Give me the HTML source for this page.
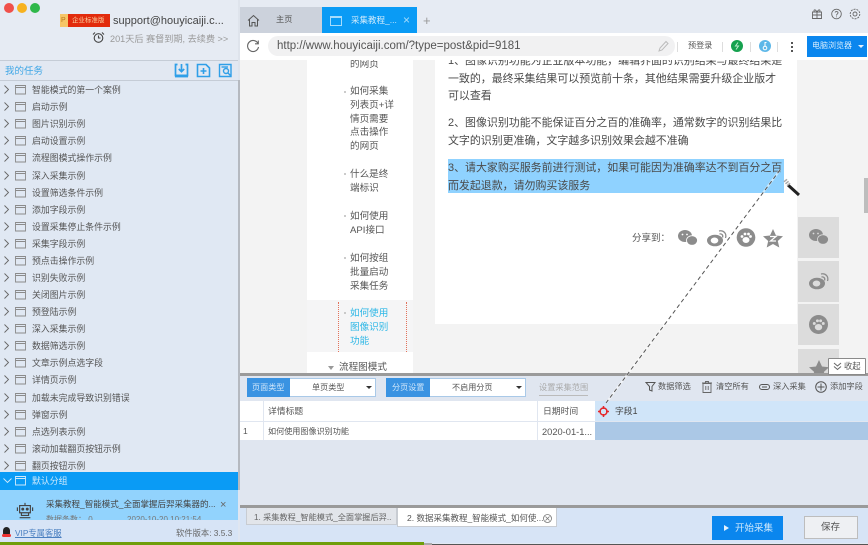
<!DOCTYPE html>
<html><head><meta charset="utf-8">
<style>
html,body{margin:0;padding:0;width:868px;height:545px;overflow:hidden;background:#e2e8f2}
body{font-family:"Liberation Sans","Noto Sans CJK SC",sans-serif;color:#555;position:relative}
#w{position:absolute;left:0;top:0;width:868px;height:545px;filter:blur(.25px)}
.a{position:absolute;white-space:nowrap}
.b{position:absolute}
.it{position:absolute;left:0;width:238px;height:17px;font-size:8.900px;line-height:17px;color:#555}
.it span{position:absolute;left:32px;top:1px}
.it svg{position:absolute;left:0;top:3px}
.p{position:absolute;left:448px;font-size:10.950px;line-height:17.600px;color:#4a4a4a;white-space:nowrap}
.n{position:absolute;left:350px;font-size:9.600px;line-height:13.800px;color:#555;white-space:nowrap}
.d{position:absolute;left:344px;width:2px;height:2px;background:#bbb;border-radius:1px}
.s{position:absolute;left:798px;width:41px;background:#dcdcdc}
</style></head><body><div id="w">
<svg width="0" height="0" style="position:absolute"><defs>
<symbol id="r" viewBox="0 0 27 11"><g fill="none" stroke-width=".9"><path d="M4.500 1.500L8.500 5.500L4.500 9.500" stroke="#666"/><path d="M15.500 1.500H25.500V10H15.500ZM15.500 3.500H25.500" stroke="#8a8a8a"/></g></symbol>
</defs></svg>

<!-- page content (below address bar in stacking order) -->
<div class="b" style="left:240px;top:60px;width:628px;height:315px;background:#f3f3f3"></div>
<div class="b" style="left:307px;top:60px;width:106px;height:240px;background:#fff"></div>
<div class="b" style="left:307px;top:300px;width:106px;height:52px;background:#f5f5f6"></div>
<div class="b" style="left:307px;top:352px;width:106px;height:23px;background:#fff"></div>
<div class="b" style="left:435px;top:60px;width:362px;height:264px;background:#fff"></div>

<div class="n" style="top:58px">的网页</div>
<div class="d" style="top:91px"></div>
<div class="n" style="top:85px">如何采集<br>列表页+详<br>情页需要<br>点击操作<br>的网页</div>
<div class="d" style="top:173px"></div>
<div class="n" style="top:168px">什么是终<br>端标识</div>
<div class="d" style="top:215px"></div>
<div class="n" style="top:210px">如何使用<br>API接口</div>
<div class="d" style="top:257px"></div>
<div class="n" style="top:252px">如何按组<br>批量启动<br>采集任务</div>
<div class="d" style="top:312px"></div>
<div class="n" style="top:307px;color:#2db7e6">如何使用<br>图像识别<br>功能</div>
<div class="b" style="left:338px;top:302px;width:0;height:50px;border-left:1px dotted #e2725b"></div>
<div class="b" style="left:406px;top:302px;width:0;height:50px;border-left:1px dotted #e2725b"></div>
<div class="b" style="left:328px;top:366px;width:0;height:0;border-left:3px solid transparent;border-right:3px solid transparent;border-top:4px solid #999"></div>
<div class="a" style="left:339px;top:361px;font-size:9.600px;line-height:14px;color:#555">流程图模式</div>

<div class="b" style="left:448px;top:159px;width:336px;height:34px;background:#8fd2ff"></div>
<div class="p" style="top:53px">1、图像识别功能为企业版本功能，编辑界面的识别结果与最终结果是</div>
<div class="p" style="top:71px">一致的，最终采集结果可以预览前十条，其他结果需要升级企业版才</div>
<div class="p" style="top:88px">可以查看</div>
<div class="p" style="top:115px">2、图像识别功能不能保证百分之百的准确率，通常数字的识别结果比</div>
<div class="p" style="top:133px">文字的识别更准确，文字越多识别效果会越不准确</div>
<div class="p" style="top:160px">3、请大家购买服务前进行测试，如果可能因为准确率达不到百分之百</div>
<div class="p" style="top:178px">而发起退款，请勿购买该服务</div>

<div class="a" style="left:632px;top:232px;font-size:9.500px;line-height:14px;color:#555">分享到：</div>
<svg class="b" style="left:677px;top:228px" width="108" height="20" viewBox="0 0 108 20" fill="#8c8c8c"><ellipse cx="8" cy="8" rx="7" ry="6"/><ellipse cx="15" cy="12.500" rx="5.500" ry="4.800" stroke="#fff" stroke-width=".8"/><circle cx="5.500" cy="6.500" r=".9" fill="#fff"/><circle cx="10" cy="6.500" r=".9" fill="#fff"/><ellipse cx="38" cy="12.500" rx="8" ry="5.800"/><ellipse cx="37.500" cy="12.500" rx="3.800" ry="3" fill="#fff"/><path d="M42 3C46 2 50 5 48.500 10M42.500 6C44.500 5.500 46.500 7 45.500 9.500" fill="none" stroke="#8c8c8c" stroke-width="1.300"/><circle cx="69" cy="9.500" r="9.300"/><ellipse cx="69" cy="12" rx="3.500" ry="3" fill="#fff"/><circle cx="65" cy="8.500" r="1.400" fill="#fff"/><circle cx="68" cy="6" r="1.400" fill="#fff"/><circle cx="71.500" cy="6" r="1.400" fill="#fff"/><circle cx="73.500" cy="8.500" r="1.400" fill="#fff"/><path d="M96 1L99 7.500L106 8.300L100.800 13L102.300 19.500L96 16L89.700 19.500L91.200 13L86 8.300L93 7.500Z"/><path d="M93 8.500H99L93.500 13H99" fill="none" stroke="#fff" stroke-width="1.200"/></svg>

<div class="s" style="top:217px;height:41px"></div>
<div class="s" style="top:261px;height:41px"></div>
<div class="s" style="top:304px;height:41px"></div>
<div class="s" style="top:349px;height:26px"></div>
<svg class="b" style="left:808px;top:228px" width="22" height="18" viewBox="0 0 22 18" fill="#8c8c8c"><ellipse cx="8" cy="7" rx="7" ry="6"/><ellipse cx="15" cy="11.500" rx="5.500" ry="4.800" stroke="#dcdcdc" stroke-width=".8"/><circle cx="5.500" cy="5.500" r=".9" fill="#dcdcdc"/><circle cx="10" cy="5.500" r=".9" fill="#dcdcdc"/></svg>
<svg class="b" style="left:808px;top:271px" width="22" height="20" viewBox="0 0 22 20" fill="#8c8c8c"><ellipse cx="9" cy="12.500" rx="8" ry="5.800"/><ellipse cx="8.500" cy="12.500" rx="3.800" ry="3" fill="#dcdcdc"/><path d="M13 3C17 2 21 5 19.500 10M13.500 6C15.500 5.500 17.500 7 16.500 9.500" fill="none" stroke="#8c8c8c" stroke-width="1.300"/></svg>
<svg class="b" style="left:809px;top:315px" width="19" height="19" viewBox="0 0 18 18" fill="#8c8c8c"><circle cx="9" cy="9" r="9"/><ellipse cx="9" cy="11.500" rx="3.500" ry="3" fill="#dcdcdc"/><circle cx="5" cy="8" r="1.400" fill="#dcdcdc"/><circle cx="8" cy="5.500" r="1.400" fill="#dcdcdc"/><circle cx="11" cy="5.500" r="1.400" fill="#dcdcdc"/><circle cx="13.500" cy="8" r="1.400" fill="#dcdcdc"/></svg>
<svg class="b" style="left:809px;top:360px" width="20" height="15" viewBox="0 0 20 15" fill="#8c8c8c"><path d="M10 0L13 6.500L20 7.300L14.800 12L16.300 15H3.700L5.200 12L0 7.300L7 6.500Z"/></svg>
<div class="b" style="left:864px;top:178px;width:4px;height:35px;background:#bdbdbd"></div>

<!-- bottom panel -->
<div class="b" style="left:240px;top:375px;width:628px;height:130px;background:#e0e6f0"></div>
<div class="b" style="left:239px;top:373px;width:629px;height:2.500px;background:#9a9a9a"></div>
<div class="b" style="left:828px;top:358px;width:36px;height:15px;background:#fff;border:1px solid #8a8a8a;border-radius:1px;box-sizing:content-box"></div>
<svg class="b" style="left:833px;top:362px" width="9" height="9" fill="none" stroke="#666" stroke-width="1"><path d="M1 1L4.500 4L8 1M1 4.500L4.500 7.500L8 4.500"/></svg>
<div class="a" style="left:844px;top:359px;font-size:8.300px;line-height:14px;color:#555">收起</div>

<div class="b" style="left:247px;top:378px;width:129px;height:19px;background:#fff;box-sizing:border-box;border:1px solid #a9c9e8"></div>
<div class="b" style="left:247px;top:378px;width:43px;height:19px;background:#3a93e2"></div>
<div class="a" style="left:252px;top:381px;font-size:8.100px;line-height:14px;color:#cfe6fa">页面类型</div>
<div class="a" style="left:312px;top:381px;font-size:8.100px;line-height:14px;color:#555">单页类型</div>
<div class="b" style="left:366px;top:386px;width:0;height:0;border-left:3px solid transparent;border-right:3px solid transparent;border-top:3px solid #333"></div>
<div class="b" style="left:386px;top:378px;width:140px;height:19px;background:#fff;box-sizing:border-box;border:1px solid #a9c9e8"></div>
<div class="b" style="left:386px;top:378px;width:44px;height:19px;background:#3a93e2"></div>
<div class="a" style="left:392px;top:381px;font-size:8.100px;line-height:14px;color:#cfe6fa">分页设置</div>
<div class="a" style="left:452px;top:381px;font-size:8.100px;line-height:14px;color:#555">不启用分页</div>
<div class="b" style="left:516px;top:386px;width:0;height:0;border-left:3px solid transparent;border-right:3px solid transparent;border-top:3px solid #333"></div>
<div class="a" style="left:539px;top:381px;font-size:8.200px;line-height:14px;color:#aaa;border-bottom:1px solid #bbb">设置采集范围</div>

<svg class="b" style="left:645px;top:381px" width="11" height="11" fill="none" stroke="#555" stroke-width="1"><path d="M1 1.500H10L7 5.500V10L4.500 9V5.500Z"/></svg>
<div class="a" style="left:658px;top:380px;font-size:8.200px;line-height:14px;color:#555">数据筛选</div>
<svg class="b" style="left:702px;top:381px" width="10" height="12" fill="none" stroke="#666" stroke-width=".9"><path d="M1 2.500H9V11.500H1ZM0 2H10M3.500 2V.500H6.500V2M3.800 5V9M6.200 5V9"/></svg>
<div class="a" style="left:716px;top:380px;font-size:8.200px;line-height:14px;color:#555">清空所有</div>
<svg class="b" style="left:759px;top:383px" width="11" height="8" fill="none" stroke="#555" stroke-width="1"><rect x=".5" y="1.500" width="10" height="5" rx="2.500"/><path d="M3 4H8"/></svg>
<div class="a" style="left:773px;top:380px;font-size:8.200px;line-height:14px;color:#555">深入采集</div>
<svg class="b" style="left:815px;top:381px" width="12" height="12" fill="none" stroke="#555" stroke-width="1"><circle cx="6" cy="6" r="5.300"/><path d="M6 2.500V9.500M2.500 6H9.500"/></svg>
<div class="a" style="left:830px;top:380px;font-size:8.200px;line-height:14px;color:#555">添加字段</div>

<!-- table -->
<div class="b" style="left:240px;top:401px;width:23px;height:20px;background:#fff"></div>
<div class="b" style="left:264px;top:401px;width:273px;height:20px;background:#fff"></div>
<div class="b" style="left:538px;top:401px;width:57px;height:20px;background:#fff"></div>
<div class="b" style="left:595px;top:401px;width:273px;height:20px;background:#d0e5f9"></div>
<div class="b" style="left:240px;top:422px;width:23px;height:18px;background:#fff"></div>
<div class="b" style="left:264px;top:422px;width:273px;height:18px;background:#fff"></div>
<div class="b" style="left:538px;top:422px;width:57px;height:18px;background:#fff"></div>
<div class="b" style="left:595px;top:422px;width:273px;height:18px;background:#abc8e6"></div>
<div class="a" style="left:268px;top:404px;font-size:8.800px;line-height:14px;color:#555">详情标题</div>
<div class="a" style="left:543px;top:404px;font-size:8.800px;line-height:14px;color:#555">日期时间</div>
<div class="a" style="left:615px;top:404px;font-size:8.800px;line-height:14px;color:#444">字段1</div>
<div class="a" style="left:243px;top:424px;font-size:8.500px;line-height:14px;color:#555">1</div>
<div class="a" style="left:268px;top:425px;font-size:8.100px;line-height:14px;color:#555">如何使用图像识别功能</div>
<div class="a" style="left:542px;top:425px;font-size:9.300px;line-height:14px;color:#555">2020-01-1...</div>
<svg class="b" style="left:598px;top:406px" width="11" height="11" fill="none" stroke="#e5262a" stroke-width="1.500"><circle cx="5.500" cy="5.500" r="3.500"/><path d="M5.500 0V3M5.500 8V11M0 5.500H3M8 5.500H11"/></svg>

<!-- dashed line + wand -->
<svg class="b" style="left:590px;top:160px" width="220" height="255" fill="none"><path d="M190 10L16 243" stroke="#fff" stroke-width="2.200" opacity=".5"/><path d="M190 10L16 243" stroke="#555" stroke-width="1" stroke-dasharray="4 3"/><path d="M198 25L209 35" stroke="#222" stroke-width="3"/><path d="M195 20L199 25" stroke="#aaa" stroke-width="4" stroke-dasharray="1.500 1"/></svg>

<!-- sidebar header -->
<div class="b" style="left:0;top:0;width:238px;height:60px;background:#e6ebf3"></div>
<div class="b" style="left:4px;top:2.500px;width:10px;height:10px;border-radius:50%;background:#f0504a"></div>
<div class="b" style="left:17px;top:2.500px;width:10px;height:10px;border-radius:50%;background:#f7b21f"></div>
<div class="b" style="left:30px;top:2.500px;width:10px;height:10px;border-radius:50%;background:#2fb84a"></div>
<div class="b" style="left:60px;top:14px;width:8px;height:13px;background:#f6c667"></div>
<div class="a" style="left:61px;top:15px;font-size:7px;line-height:11px;color:#b8791c">P</div>
<div class="b" style="left:68px;top:14px;width:42px;height:13px;background:#e22b0c"></div>
<div class="a" style="left:72px;top:15px;font-size:6.500px;line-height:11px;color:#fbd0a0">企业标准版</div>
<div class="a" style="left:113px;top:14px;font-size:11px;line-height:15px;color:#444">support@houyicaiji.c...</div>
<svg class="b" style="left:92px;top:31px" width="13" height="13" viewBox="0 0 13 13" fill="none" stroke="#444" stroke-width="1.100"><circle cx="6.500" cy="7" r="4.300"/><path d="M6.500 4.500V7H8.500M1 3.500L3 1.500M12 3.500L10 1.500"/></svg>
<div class="a" style="left:110px;top:32px;font-size:9.150px;line-height:14px;color:#999">201天后 赛督到期, 去续费 &gt;&gt;</div>
<div class="b" style="left:0;top:60px;width:238px;height:1px;background:#c5ccd6"></div>
<div class="b" style="left:0;top:61px;width:238px;height:19px;background:#e2e8f2"></div>
<div class="a" style="left:5px;top:65px;font-size:9.500px;line-height:14px;color:#3ea6e6">我的任务</div>
<svg class="b" style="left:174px;top:63px" width="15" height="15" viewBox="0 0 15 15" fill="none" stroke="#2f9fe8" stroke-width="1.700"><path d="M3.500 1.500H1.500V12.500H13.500V1.500H11.500"/><path d="M1 13H14" stroke-width="2.800"/><path d="M7.500 1V8M4.800 6L7.500 8.700L10.200 6"/></svg>
<svg class="b" style="left:196px;top:63px" width="15" height="15" viewBox="0 0 15 15" fill="none" stroke="#2f9fe8" stroke-width="1.600"><path d="M1.500 1.500H10L13.500 5V13.500H1.500Z"/><path d="M7.500 5V11M4.500 8H10.500"/></svg>
<svg class="b" style="left:218px;top:63px" width="15" height="15" viewBox="0 0 15 15" fill="none" stroke="#2f9fe8" stroke-width="1.400"><path d="M1.500 1.500H13V13.500H1.500Z"/><path d="M3.500 4H10"/><circle cx="8" cy="8" r="2.500"/><path d="M10 10L12.500 12.500"/></svg>
<div class="b" style="left:0;top:80px;width:238px;height:1px;background:#c5ccd6"></div>

<!-- task list -->
<div class="b" style="left:0;top:81px;width:238px;height:392px;background:#e0e8f3"></div>
<div class="it" style="top:81px"><svg width="27" height="11"><use href="#r"/></svg><span>智能模式的第一个案例</span></div>
<div class="it" style="top:98px"><svg width="27" height="11"><use href="#r"/></svg><span>启动示例</span></div>
<div class="it" style="top:115px"><svg width="27" height="11"><use href="#r"/></svg><span>图片识别示例</span></div>
<div class="it" style="top:132px"><svg width="27" height="11"><use href="#r"/></svg><span>启动设置示例</span></div>
<div class="it" style="top:149px"><svg width="27" height="11"><use href="#r"/></svg><span>流程图模式操作示例</span></div>
<div class="it" style="top:167px"><svg width="27" height="11"><use href="#r"/></svg><span>深入采集示例</span></div>
<div class="it" style="top:184px"><svg width="27" height="11"><use href="#r"/></svg><span>设置筛选条件示例</span></div>
<div class="it" style="top:201px"><svg width="27" height="11"><use href="#r"/></svg><span>添加字段示例</span></div>
<div class="it" style="top:218px"><svg width="27" height="11"><use href="#r"/></svg><span>设置采集停止条件示例</span></div>
<div class="it" style="top:235px"><svg width="27" height="11"><use href="#r"/></svg><span>采集字段示例</span></div>
<div class="it" style="top:252px"><svg width="27" height="11"><use href="#r"/></svg><span>预点击操作示例</span></div>
<div class="it" style="top:269px"><svg width="27" height="11"><use href="#r"/></svg><span>识别失败示例</span></div>
<div class="it" style="top:286px"><svg width="27" height="11"><use href="#r"/></svg><span>关闭图片示例</span></div>
<div class="it" style="top:303px"><svg width="27" height="11"><use href="#r"/></svg><span>预登陆示例</span></div>
<div class="it" style="top:320px"><svg width="27" height="11"><use href="#r"/></svg><span>深入采集示例</span></div>
<div class="it" style="top:337px"><svg width="27" height="11"><use href="#r"/></svg><span>数据筛选示例</span></div>
<div class="it" style="top:354px"><svg width="27" height="11"><use href="#r"/></svg><span>文章示例点选字段</span></div>
<div class="it" style="top:371px"><svg width="27" height="11"><use href="#r"/></svg><span>详情页示例</span></div>
<div class="it" style="top:389px"><svg width="27" height="11"><use href="#r"/></svg><span>加载未完成导致识别错误</span></div>
<div class="it" style="top:406px"><svg width="27" height="11"><use href="#r"/></svg><span>弹窗示例</span></div>
<div class="it" style="top:423px"><svg width="27" height="11"><use href="#r"/></svg><span>点选列表示例</span></div>
<div class="it" style="top:440px"><svg width="27" height="11"><use href="#r"/></svg><span>滚动加载翻页按钮示例</span></div>
<div class="it" style="top:457px"><svg width="27" height="11"><use href="#r"/></svg><span>翻页按钮示例</span></div>
<div class="it" style="top:472px;height:18px;background:#0a9bf5;color:#cfeafc"><svg width="27" height="11" fill="none" stroke="#cfeafc" stroke-width=".9"><path d="M3.500 3.500L7.500 7.500L11.500 3.500"/><path d="M15.500 1.500H25.500V10H15.500ZM15.500 3.500H25.500"/></svg><span>默认分组</span></div>

<!-- task card -->
<div class="b" style="left:0;top:490px;width:238px;height:30px;background:#92d3fd;overflow:hidden">
<div class="a" style="left:46px;top:7px;font-size:8.500px;line-height:14px;color:#444">采集教程_智能模式_全面掌握后羿采集器的...</div>
<div class="a" style="left:220px;top:8px;font-size:11px;line-height:14px;color:#666">×</div>
<div class="a" style="left:46px;top:24px;font-size:8px;line-height:12px;color:#777">数据条数： 0</div>
<div class="a" style="left:127px;top:24px;font-size:8px;line-height:12px;color:#777">2020-10-20 10:21:54</div>
<svg class="b" style="left:16px;top:12px" width="18" height="17" viewBox="0 0 20 19" fill="none" stroke="#444" stroke-width="1.300"><path d="M4 4H16V12H4ZM10 4V1M1.500 6V10M18.500 6V10M6 12V15H14V12M4 17.500H16"/><circle cx="7.500" cy="8" r="1" fill="#444"/><circle cx="12.500" cy="8" r="1" fill="#444"/></svg>
</div>
<!-- footer -->
<div class="b" style="left:0;top:520px;width:238px;height:22px;background:#d7e4f6"></div>
<div class="b" style="left:3px;top:527px;width:7px;height:9px;border-radius:4px 4px 3px 3px;background:#222"></div>
<div class="b" style="left:2px;top:534px;width:9px;height:3px;border-radius:2px;background:#e33"></div>
<div class="a" style="left:15px;top:527px;font-size:8.300px;line-height:13px;color:#4a7fc0;text-decoration:underline">VIP专属客服</div>
<div class="a" style="left:176px;top:527px;font-size:8.300px;line-height:13px;color:#666">软件版本: 3.5.3</div>
<!-- sidebar scrollbar -->
<div class="b" style="left:238px;top:0;width:2px;height:80px;background:#dfe4ec"></div>
<div class="b" style="left:238px;top:80px;width:2px;height:410px;background:#b5b9c0"></div>
<div class="b" style="left:238px;top:490px;width:2px;height:52px;background:#dfe6f1"></div>

<!-- tab strip -->
<div class="b" style="left:240px;top:0;width:628px;height:33px;background:#e6ebf3"></div>
<div class="b" style="left:240px;top:7px;width:82px;height:26px;background:#ccd2dc"></div>
<svg class="b" style="left:247px;top:14px" width="13" height="13" viewBox="0 0 13 13" fill="none" stroke="#555" stroke-width="1"><path d="M1 6.500L6.500 1.500L12 6.500M2.500 5.500V12H5V8.500H8V12H10.500V5.500"/></svg>
<div class="a" style="left:276px;top:13px;font-size:8.200px;line-height:14px;color:#555">主页</div>
<div class="b" style="left:322px;top:7px;width:95px;height:26px;background:#0a9bf5"></div>
<div class="b" style="left:330px;top:16px;width:10px;height:7px;border:1px solid #a5dcfc;border-top-width:2px"></div>
<div class="a" style="left:351px;top:13px;font-size:8.500px;line-height:14px;color:#cfeafc">采集教程_...</div>
<div class="a" style="left:403px;top:13px;font-size:12px;line-height:15px;color:#a5dcfc">×</div>
<div class="a" style="left:423px;top:12px;font-size:13px;line-height:17px;color:#999">+</div>
<svg class="b" style="left:811px;top:8px" width="50" height="12" viewBox="0 0 50 12" fill="none" stroke="#666" stroke-width=".9"><path d="M1.500 4H10.500V10.500H1.500ZM6 4V10.500M1.500 7H10.500M3.500 4C2 2 4 .500 6 4C8 .500 10 2 8.500 4"/><circle cx="25.500" cy="6" r="4.800"/><path d="M24 4.500C24.500 3 27.500 3.500 27 5C26.700 6 25.500 6 25.500 7.500M25.500 8.500V9.300"/><circle cx="44" cy="6" r="2"/><circle cx="44" cy="6" r="4.800" stroke-dasharray="2 1"/></svg>

<!-- address bar -->
<div class="b" style="left:240px;top:33px;width:628px;height:27px;background:#fff"></div>
<svg class="b" style="left:246px;top:39px" width="14" height="14" viewBox="0 0 14 14" fill="none" stroke="#666" stroke-width="1.100"><path d="M12 4.500A5.500 5.500 0 1 0 12.500 8M12.300 1.500V4.800H9"/></svg>
<div class="b" style="left:268px;top:36px;width:407px;height:20px;border-radius:10px;background:#f1f1f2"></div>
<div class="a" style="left:277px;top:38px;font-size:11.500px;line-height:16px;color:#555">http://www.houyicaiji.com/?type=post&amp;pid=9181</div>
<svg class="b" style="left:658px;top:40px" width="11" height="12" viewBox="0 0 11 12" fill="none" stroke="#bbb" stroke-width="1"><path d="M1 11L2 8L8 1.500L10 3.500L4 10Z"/></svg>
<div class="b" style="left:677px;top:42px;width:1px;height:10px;background:#ddd"></div>
<div class="a" style="left:688px;top:39px;font-size:8.100px;line-height:14px;color:#555">预登录</div>
<div class="b" style="left:722px;top:42px;width:1px;height:10px;background:#ddd"></div>
<div class="b" style="left:731px;top:40px;width:12px;height:12px;border-radius:50%;background:#16a14f"></div>
<svg class="b" style="left:731px;top:40px" width="12" height="12" fill="none" stroke="#bdeccf" stroke-width="1"><path d="M7 2.500L4.500 6H7.500L5 9.500"/></svg>
<div class="b" style="left:750px;top:42px;width:1px;height:10px;background:#ddd"></div>
<div class="b" style="left:759px;top:40px;width:12px;height:12px;border-radius:50%;background:#5db7e8"></div>
<svg class="b" style="left:759px;top:40px" width="12" height="12" fill="none" stroke="#fff" stroke-width="1"><circle cx="6" cy="8" r="1.800"/><path d="M6 6V2.500H7.500"/></svg>
<div class="b" style="left:777px;top:42px;width:1px;height:10px;background:#ddd"></div>
<div class="b" style="left:791px;top:42px;width:2px;height:2px;background:#555"></div>
<div class="b" style="left:791px;top:46px;width:2px;height:2px;background:#555"></div>
<div class="b" style="left:791px;top:50px;width:2px;height:2px;background:#555"></div>
<div class="b" style="left:807px;top:36px;width:60px;height:21px;background:#0a86ee"></div>
<div class="a" style="left:812px;top:39px;font-size:8px;line-height:14px;color:#d5ecfd">电脑浏览器</div>
<div class="b" style="left:858px;top:45px;width:0;height:0;border-left:3px solid transparent;border-right:3px solid transparent;border-top:3px solid #e3f2fe"></div>

<!-- bottom tabs -->
<div class="b" style="left:240px;top:505px;width:628px;height:3px;background:#9a9a9a"></div>
<div class="b" style="left:240px;top:508px;width:628px;height:35px;background:#d7e4f6"></div>
<div class="b" style="left:246px;top:508px;width:151px;height:17px;background:#e2e5ea;box-sizing:border-box;border:1px solid #c8ccd2;border-top:0"></div>
<div class="a" style="left:254px;top:511px;font-size:8.200px;line-height:13px;color:#666">1. 采集教程_智能模式_全面掌握后羿..</div>
<div class="b" style="left:397px;top:508px;width:160px;height:19px;background:#fff;box-sizing:border-box;border:1px solid #c8ccd2;border-top:0"></div>
<div class="a" style="left:407px;top:512px;font-size:8.500px;line-height:13px;color:#555">2. 数据采集教程_智能模式_如何使...</div>
<svg class="b" style="left:543px;top:514px" width="9" height="9" fill="none" stroke="#777" stroke-width=".8"><circle cx="4.500" cy="4.500" r="4"/><path d="M2.500 2.500L6.500 6.500M6.500 2.500L2.500 6.500"/></svg>
<div class="b" style="left:712px;top:516px;width:71px;height:24px;background:#0a86ee"></div>
<div class="b" style="left:724px;top:525px;width:0;height:0;border-top:3px solid transparent;border-bottom:3px solid transparent;border-left:5px solid #e3f2fe"></div>
<div class="a" style="left:735px;top:522px;font-size:9.500px;line-height:14px;color:#cfe8fc">开始采集</div>
<div class="b" style="left:804px;top:516px;width:54px;height:23px;background:#eef0f3;box-sizing:border-box;border:1px solid #bdbdbd"></div>
<div class="a" style="left:821px;top:521px;font-size:9.500px;line-height:14px;color:#555">保存</div>

<!-- bottom strip -->
<div class="b" style="left:0;top:542px;width:424px;height:3px;background:#6f9e0a"></div>
<div class="b" style="left:424px;top:543px;width:8px;height:2px;background:#aaa"></div>
<div class="b" style="left:432px;top:543.500px;width:436px;height:1.500px;background:#555"></div>
</div></body></html>
